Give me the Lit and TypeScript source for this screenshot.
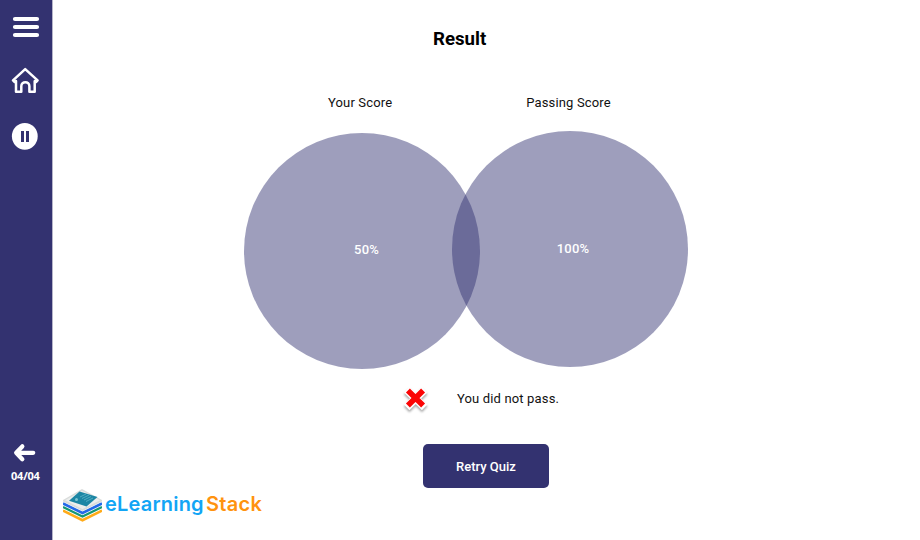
import { LitElement, html, css } from 'lit';

export class SideBar extends LitElement {
  static properties = {
    page: { type: String },
  };

  declare page: string;

  static styles = css`
    :host {
      display: flex;
      flex-direction: column;
      justify-content: space-between;
      box-sizing: border-box;
      width: 53px;
      height: 100%;
      background: #333270;
      border-right: 1px solid #b6b5c9;
      color: white;
    }

    .group {
      display: flex;
      flex-direction: column;
    }

    .bottom {
      padding-bottom: 56px;
    }

    svg {
      display: block;
    }

    .menu {
      margin: 16px 0 0 12px;
    }

    .home {
      margin: 29px 0 0 11px;
    }

    .pause {
      margin: 28px 0 0 11px;
    }

    .back {
      margin-left: 13px;
    }

    .page {
      margin: 5px 0 0 11px;
      font: 700 11px/16px 'Open Sans', sans-serif;
      letter-spacing: -0.2px;
      white-space: nowrap;
    }
  `;

  constructor() {
    super();
    this.page = '';
  }

  render() {
    return html`
      <div class="group">
        <svg class="menu" width="28" height="22" viewBox="0 0 28 22">
          <path d="M3 3h22M3 11h22M3 19h22" stroke="white" stroke-width="4.2" stroke-linecap="round" />
        </svg>
        <svg class="home" width="29" height="27" viewBox="0 0 29 27" fill="none" stroke="white" stroke-width="2.5" stroke-linejoin="round" stroke-linecap="round">
          <path d="M2 13.4L14.2 2.1L26.6 13.4L25 15L23.7 14.1V24.8H18.4V19.3C18.4 13.8 10.3 13.8 10.3 19.3V24.8H5V14.1L3.7 15Z" />
        </svg>
        <svg class="pause" width="28" height="28" viewBox="0 0 28 28">
          <ellipse cx="13.8" cy="14.3" rx="12.9" ry="13.4" fill="white" />
          <path d="M10 9h3v11h-3zM15 9h3v11h-3z" fill="#333270" />
        </svg>
      </div>
      <div class="group bottom">
        <svg class="back" width="24" height="20" viewBox="0 0 24 20" fill="none" stroke="white" stroke-width="4.3" stroke-linecap="round" stroke-linejoin="round">
          <path d="M9.3 3.4L3.2 9.8L9.3 16.2M4 9.8H20.2" />
        </svg>
        <div class="page">${this.page}</div>
      </div>
    `;
  }
}

customElements.define('side-bar', SideBar);

export class BrandLogo extends LitElement {
  static styles = css`
    :host {
      display: flex;
      align-items: center;
      height: 36px;
      font: 600 20px/26px Inter, sans-serif;
      white-space: nowrap;
    }

    svg {
      display: block;
      margin-right: 3px;
    }

    span {
      padding-bottom: 5px;
    }

    .first {
      width: 101px;
      color: #12a5f5;
      letter-spacing: 0.2px;
    }

    .second {
      color: #ff930f;
      letter-spacing: 0.3px;
    }
  `;

  render() {
    return html`
      <svg width="39" height="36" viewBox="0 0 39 36">
        <path d="M0 22.6L19.5 32.2 39 22.6" fill="none" stroke="#ffab19" stroke-width="2.6" />
        <path d="M0 19L19.5 28.5 39 19" fill="none" stroke="#159873" stroke-width="2.2" />
        <path d="M0 15.5L19.5 25 39 15.5" fill="none" stroke="#2369e8" stroke-width="2.6" />
        <path d="M0 12L19 1 39 12v1.5L19.5 23 0 13.5z" fill="#d9dcdb" />
        <path d="M2 12.3L19 2.8 37 12.3 19.5 21z" fill="#eceeed" />
        <path d="M6 12.8L16.5 3.5 34.5 9 23.5 18.5z" fill="#1c86a4" />
        <path d="M17 9l6-3M19 10.5l7-3.5M21 12l7-3.5M23 13.5l7-3.5" stroke="#5fb5c6" stroke-width="0.8" />
        <circle cx="13.5" cy="11.5" r="1.5" fill="#7bc4d2" />
      </svg>
      <span class="first">eLearning</span>
      <span class="second">Stack</span>
    `;
  }
}

customElements.define('brand-logo', BrandLogo);

export class AppRoot extends LitElement {
  static properties = {
    score: { type: Number },
    passingScore: { type: Number },
  };

  declare score: number;
  declare passingScore: number;

  static styles = css`
    :host {
      display: flex;
      width: 920px;
      height: 540px;
      overflow: hidden;
      background: white;
      color: #111;
      font: 400 13px/20px Roboto, sans-serif;
      letter-spacing: 0.15px;
    }

    side-bar {
      flex: none;
      letter-spacing: 0;
    }

    main {
      display: flex;
      flex-direction: column;
      flex: 1;
    }

    h1 {
      margin: 26px 0 0 380px;
      font-size: 18.67px;
      line-height: 26px;
      font-weight: 700;
      letter-spacing: 0;
      color: black;
    }

    .labels {
      display: flex;
      gap: 134px;
      margin: 41px 0 0 275px;
    }

    .scores {
      display: flex;
      height: 238px;
      margin: 18px 0 0 191px;
    }

    .circle {
      display: flex;
      align-items: center;
      justify-content: center;
      box-sizing: border-box;
      width: 236px;
      height: 236px;
      border-radius: 50%;
      background: rgba(50, 50, 114, 0.475);
      color: white;
      font-weight: 500;
    }

    .yours {
      margin-top: 2px;
      padding: 0 0 3px 9px;
    }

    .passing {
      margin-left: -28px;
      padding-left: 6px;
    }

    .verdict {
      display: flex;
      align-items: center;
      gap: 26px;
      height: 30px;
      margin: 15px 0 0 349px;
    }

    .verdict span {
      padding-bottom: 1px;
    }

    .cross {
      filter: drop-shadow(0 2px 1px rgba(0, 0, 0, 0.35));
    }

    button {
      width: 126px;
      height: 44px;
      margin: 30px 0 0 370px;
      padding: 1px 0 0;
      border: none;
      border-radius: 5px;
      background: #333270;
      color: white;
      font: 500 13px/20px Roboto, sans-serif;
      letter-spacing: 0;
    }

    brand-logo {
      margin: 0 0 0 10px;
    }
  `;

  constructor() {
    super();
    this.score = 50;
    this.passingScore = 100;
  }

  render() {
    return html`
      <side-bar page="04/04"></side-bar>
      <main>
        <h1>Result</h1>
        <div class="labels">
          <span>Your Score</span>
          <span>Passing Score</span>
        </div>
        <div class="scores">
          <div class="circle yours">${this.score}%</div>
          <div class="circle passing">${this.passingScore}%</div>
        </div>
        <div class="verdict">
          <svg class="cross" width="29" height="28" viewBox="0 0 29 28">
            <path d="M7.5 7.5L19.8 19.5M19.8 7.5L7.5 19.5" stroke="white" stroke-width="8" stroke-linecap="square" />
            <path d="M7.9 7.4L19.1 18.6M19.1 7.4L7.9 18.6" stroke="#fb0505" stroke-width="5.6" stroke-linecap="square" />
          </svg>
          <span>${this.score >= this.passingScore ? 'You passed.' : 'You did not pass.'}</span>
        </div>
        <button>Retry Quiz</button>
        <brand-logo></brand-logo>
      </main>
    `;
  }
}

customElements.define('app-root', AppRoot);
